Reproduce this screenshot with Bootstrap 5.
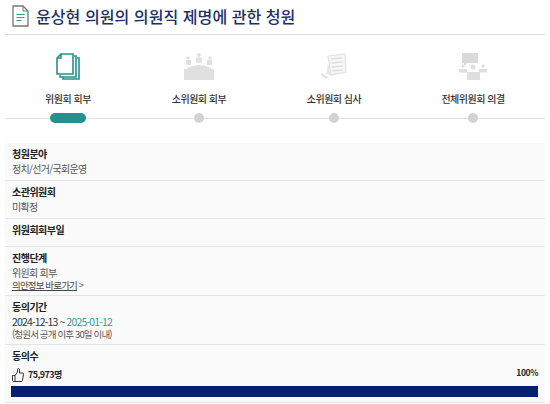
<!DOCTYPE html>
<html lang="ko">
<head>
  <meta charset="UTF-8" />
  <meta name="viewport" content="width=device-width, initial-scale=1.0"/>
  <title>청원 상세</title>
  <link href="https://cdn.jsdelivr.net/npm/bootstrap@5.3.0/dist/css/bootstrap.min.css" rel="stylesheet">
  <script src="https://cdn.jsdelivr.net/npm/bootstrap@5.3.0/dist/js/bootstrap.bundle.min.js"></script>
  <style>
    body {
      background: #fff;
      color: #222;
      font-family: "Noto Sans CJK KR", "Noto Sans", sans-serif;
      font-size: 10px;
      line-height: 14px;
      overflow: hidden;
    }

    .page-wrap { width: 540px; margin-left: 5px; }

    .title-bar {
      height: 35px;
      padding: 5px 0 8px 7px;
      border-bottom: 1px solid #d9dbdf;
      gap: 7px;
    }

    .title-bar h1 {
      margin: 0;
      font-size: 16.1px;
      line-height: 22px;
      font-weight: 500;
      color: #1c2f66;
    }

    .steps { height: 84px; padding-top: 18px; }
    .step-a { width: 126px; }
    .step-b { width: 136px; }
    .step-c { width: 134px; }
    .step-d { width: 144px; }

    .step-icon { height: 32px; }
    .step-label { margin-top: 7px; height: 14px; font-weight: 500; color: #333; letter-spacing: -.5px; }

    .step-track { position: relative; margin-top: 2px; padding-top: 5px; }
    .step-track::before {
      content: "";
      position: absolute;
      left: 0; right: 0; top: 10px;
      border-top: 1px solid #e2e2e2;
    }
    .step-dot {
      position: relative;
      width: 10px; height: 10px;
      margin: 0 auto;
      border-radius: 50%;
      background: #d3d3d3;
    }
    .step-dot.on { width: 36px; border-radius: 5px; background: #23918c; }

    .info-box { margin-top: 24px; background: #fafafa; }
    .info-row { padding: 3px 7px 0; border-bottom: 1px solid #e4e4e4; }
    .info-row dt { font-weight: 700; color: #222; height: 16px; line-height: 16px; letter-spacing: -.5px; }
    .info-row dd { margin: 0; color: #555; letter-spacing: -.7px; }

    .row-a { height: 38px; }
    .row-c { height: 28px; }
    .row-d { height: 49px; }
    .row-e { height: 49px; }
    .row-f { height: 58px; }

    .info-row .sub-line { font-size: 9.5px; line-height: 10px; letter-spacing: -.85px; }
    .info-row .date-note { line-height: 11px; }
    .go-link { color: #444; text-decoration: underline; }
    .info-row .period { color: #333; font-size: 10.5px; line-height: 14px; letter-spacing: -.85px; }
    .period span { color: #3c9c97; }
    .count { font-weight: 700; font-size: 9px; letter-spacing: -.6px; color: #222; }
    .pct { font-weight: 700; font-size: 8.5px; color: #222; letter-spacing: -.4px; margin-top: -6px; }
    .count-line { height: 22px; }
    .vote-bar { height: 11px; margin-left: -1px; border-radius: 0; background: #e9ecef; }
    .vote-bar .progress-bar { background: #04206e; }
  </style>
</head>
<body>
  <div class="page-wrap">
    <div class="title-bar d-flex align-items-center">
      <svg width="17" height="22" viewBox="0 0 17 22" fill="none">
        <path d="M1 1h10l5 5v15H1z" stroke="#777" stroke-width="1.3" fill="#fff"/>
        <path d="M11 1v5h5" stroke="#777" stroke-width="1"/>
        <path d="M4.5 9.5h8M4.5 12.5h8M4.5 15.5h5" stroke="#2a9d97" stroke-width="1.2"/>
      </svg>
      <h1>윤상현 의원의 의원직 제명에 관한 청원</h1>
    </div>

    <div class="steps d-flex text-center">
      <div class="step-a">
        <div class="step-icon d-flex justify-content-center">
          <svg width="24" height="27" viewBox="0 0 24 27" fill="none" stroke="#2a8f8b" stroke-width="1.6">
            <path d="M21 5h2v21H7v-2"/>
            <path d="M18 3h2v21H4v-2"/>
            <path d="M5 1h12v20H1V5z" fill="#fff"/>
            <path d="M5 1v4H1"/>
          </svg>
        </div>
        <div class="step-label">위원회 회부</div>
        <div class="step-track"><div class="step-dot on"></div></div>
      </div>
      <div class="step-b">
        <div class="step-icon d-flex justify-content-center">
          <svg width="32" height="27" viewBox="0 0 32 27" fill="#e0e0e0">
            <circle cx="16" cy="2" r="2"/><rect x="13" y="4.5" width="6" height="5"/>
            <circle cx="5" cy="5" r="1.8"/><rect x="3" y="7" width="5" height="5"/>
            <circle cx="27" cy="5" r="1.8"/><rect x="24" y="7" width="5" height="5"/>
            <path d="M4 15q12-6 24 0v1H4z"/>
            <rect x="1" y="16" width="30" height="11"/>
          </svg>
        </div>
        <div class="step-label">소위원회 회부</div>
        <div class="step-track"><div class="step-dot"></div></div>
      </div>
      <div class="step-c">
        <div class="step-icon d-flex justify-content-center">
          <svg width="26" height="26" viewBox="0 0 26 26" fill="none">
            <path d="M7 3l17-2 1 18-15 3z" fill="#f6f6f6" stroke="#e2e2e2" stroke-width="1.2"/>
            <path d="M10 6l11-1M10.5 10l11-1M11 14l11-1M11.5 18l10-1" stroke="#dfdfdf" stroke-width="1.3"/>
            <path d="M7 10l-2 11 5 2z" fill="#e8e8e8"/>
            <path d="M0 21l6 4" stroke="#dfdfdf" stroke-width="2.2"/>
          </svg>
        </div>
        <div class="step-label">소위원회 심사</div>
        <div class="step-track"><div class="step-dot"></div></div>
      </div>
      <div class="step-d">
        <div class="step-icon d-flex justify-content-center">
          <svg width="28" height="27" viewBox="0 0 28 27" fill="#dedede">
            <path d="M3 0h16v10H8l-3 3v-3H3z" fill="#dadada"/>
            <circle cx="14" cy="14" r="2.5"/>
            <circle cx="4" cy="13" r="1.6"/><rect x="0" y="16" width="8" height="3.5"/>
            <circle cx="24" cy="13" r="1.6"/><rect x="20" y="16" width="8" height="3.5"/>
            <rect x="8" y="19" width="13" height="8"/>
          </svg>
        </div>
        <div class="step-label">전체위원회 의결</div>
        <div class="step-track"><div class="step-dot"></div></div>
      </div>
    </div>

    <dl class="info-box mb-0">
      <div class="info-row row-a">
        <dt>청원분야</dt>
        <dd>정치/선거/국회운영</dd>
      </div>
      <div class="info-row row-a">
        <dt>소관위원회</dt>
        <dd>미확정</dd>
      </div>
      <div class="info-row row-c">
        <dt>위원회회부일</dt>
      </div>
      <div class="info-row row-d">
        <dt>진행단계</dt>
        <dd>위원회 회부</dd>
        <dd class="sub-line"><a class="go-link" href="#">의안정보 바로가기</a> &gt;</dd>
      </div>
      <div class="info-row row-e">
        <dt>동의기간</dt>
        <dd class="period">2024-12-13 ~ <span>2025-01-12</span></dd>
        <dd class="sub-line date-note">(청원서 공개 이후 30일 이내)</dd>
      </div>
      <div class="info-row row-f">
        <dt>동의수</dt>
        <div class="count-line d-flex justify-content-between align-items-center">
          <div class="d-flex align-items-center gap-1">
            <svg width="12" height="14" viewBox="0 0 12 14" fill="none" stroke="#333" stroke-width="1">
              <path d="M.5 7.5H3v6H1.500q-1 0-1-1zM3 7.5l2.500-3.500V1.500q0-1 1-1t1 1.500V5h3q1 0 1 1l-1 6.500q0 1-1 1H3"/>
            </svg>
            <span class="count">75,973명</span>
          </div>
          <span class="pct">100%</span>
        </div>
        <div class="progress vote-bar">
          <div class="progress-bar" role="progressbar" style="width: 100%"></div>
        </div>
      </div>
    </dl>
  </div>
</body>
</html>
